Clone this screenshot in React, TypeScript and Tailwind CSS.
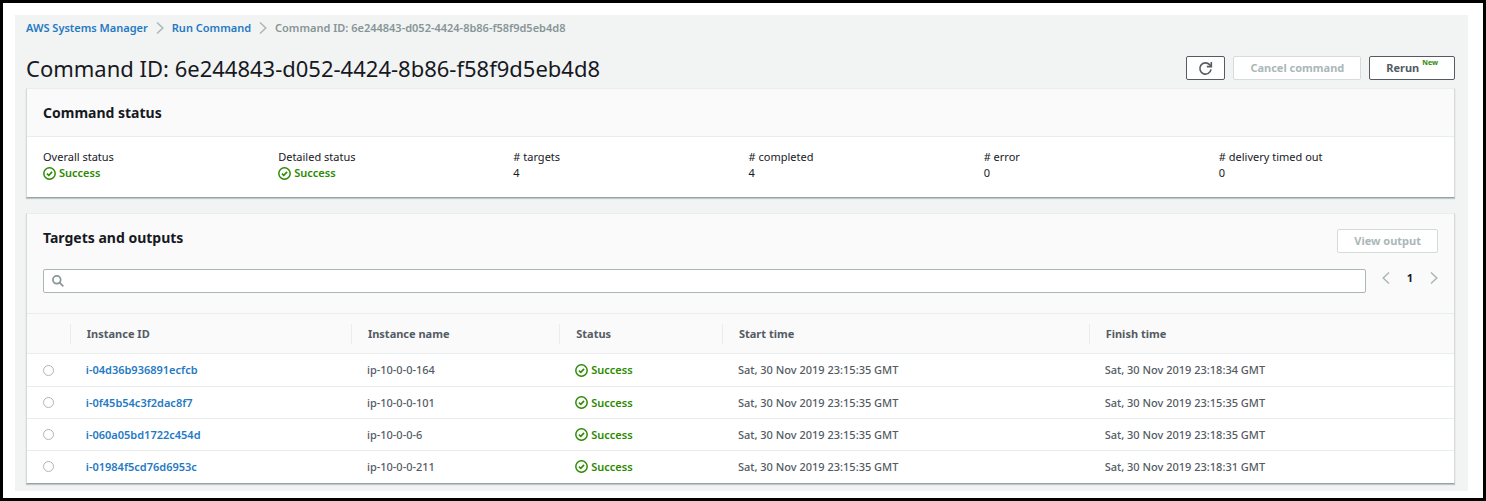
import React from "react";

const instances = [
  { id: "i-04d36b936891ecfcb", name: "ip-10-0-0-164", start: "Sat, 30 Nov 2019 23:15:35 GMT", finish: "Sat, 30 Nov 2019 23:18:34 GMT" },
  { id: "i-0f45b54c3f2dac8f7", name: "ip-10-0-0-101", start: "Sat, 30 Nov 2019 23:15:35 GMT", finish: "Sat, 30 Nov 2019 23:15:35 GMT" },
  { id: "i-060a05bd1722c454d", name: "ip-10-0-0-6", start: "Sat, 30 Nov 2019 23:15:35 GMT", finish: "Sat, 30 Nov 2019 23:18:35 GMT" },
  { id: "i-01984f5cd76d6953c", name: "ip-10-0-0-211", start: "Sat, 30 Nov 2019 23:15:35 GMT", finish: "Sat, 30 Nov 2019 23:18:31 GMT" },
];

const counts = [
  { label: "# targets", value: "4" },
  { label: "# completed", value: "4" },
  { label: "# error", value: "0" },
  { label: "# delivery timed out", value: "0" },
];

function Chevron({ left = false }: { left?: boolean }) {
  return (
    <svg viewBox="0 0 8 14" fill="none" stroke="#aab7b8" strokeWidth="1.5" className="h-[14px] w-2 shrink-0" aria-hidden="true">
      <path d={left ? "M7 1.5 L1.2 7 L7 12.5" : "M1 1.5 L6.8 7 L1 12.5"} />
    </svg>
  );
}

function Success() {
  return (
    <span className="flex items-center gap-[3px] font-semibold text-[#2b8a00]">
      <svg viewBox="0 0 16 16" fill="none" stroke="#2b8a00" strokeWidth="1.8" className="h-[13px] w-[13px] shrink-0" aria-hidden="true">
        <circle cx="8" cy="8" r="7" />
        <path d="M4.8 8.2 L7.1 10.3 L11.2 6" />
      </svg>
      Success
    </span>
  );
}

const card = "border border-t-[#eaeded] border-r-[#d5dbdb] border-b-[#95a5a6] border-l-[#d5dbdb] bg-white shadow-[0_1px_1px_0_rgba(0,28,36,0.2)]";
const button = "flex h-6 items-center rounded-xs border bg-white px-4 text-[11px] leading-4 font-bold";
const th = "p-0 text-left font-bold";
const divider = "flex h-5 items-center border-l border-[#eaeded] pl-4";

export default function App() {
  return (
    <div className="min-h-screen border-3 border-black bg-white px-3 pt-3 pb-[6px] font-['Noto_Sans','Open_Sans',sans-serif] text-[11px] leading-4 text-[#16191f]">
      <main className="mr-[3px] bg-[#f2f3f3] pt-[5px] pr-[13px] pb-[7px] pl-[11px]">
        <nav aria-label="Breadcrumb">
          <ol className="flex items-center font-semibold">
            <li><a href="#ssm" className="text-[#1f7ac4]">AWS Systems Manager</a></li>
            <li className="mx-2"><Chevron /></li>
            <li><a href="#run" className="text-[#1f7ac4]">Run Command</a></li>
            <li className="mx-2"><Chevron /></li>
            <li className="text-[#879596]">Command ID: 6e244843-d052-4424-8b86-f58f9d5eb4d8</li>
          </ol>
        </nav>

        <div className="mt-4 flex items-center justify-between pb-1">
          <h1 className="text-[22px] leading-8">Command ID: 6e244843-d052-4424-8b86-f58f9d5eb4d8</h1>
          <div className="flex gap-2">
            <button aria-label="Refresh" className="flex h-6 w-[39px] items-center justify-center rounded-xs border border-[#545b64] bg-white">
              <svg viewBox="0 0 16 16" fill="none" stroke="#545b64" strokeWidth="1.7" className="h-[15px] w-[15px]" aria-hidden="true">
                <path d="M13.9 9 A6 6 0 1 1 12.4 3.9 L14 5.6" />
                <path d="M14.2 1 V6 H9.4" />
              </svg>
            </button>
            <button disabled className={`${button} border-[#d5dbdb] text-[#aab7b8]`}>Cancel command</button>
            <button className={`${button} border-[#545b64] text-[#545b64]`}>
              Rerun
              <span className="ml-[3px] self-start text-[7px] leading-3 text-[#2b8a00]">New</span>
            </button>
          </div>
        </div>

        <section className={card}>
          <header className="border-b border-[#eaeded] bg-[#fafafa] px-4 py-3">
            <h2 className="text-sm leading-[23px] font-bold">Command status</h2>
          </header>
          <dl className="grid grid-cols-6 pt-3 pb-4 pl-4">
            <div><dt>Overall status</dt><dd><Success /></dd></div>
            <div><dt>Detailed status</dt><dd><Success /></dd></div>
            {counts.map((c) => (
              <div key={c.label}><dt>{c.label}</dt><dd>{c.value}</dd></div>
            ))}
          </dl>
        </section>

        <section className={`mt-[15px] ${card}`}>
          <header className="bg-[#fafafa] px-4 pt-[15px] pb-5">
            <div className="flex items-start justify-between">
              <h2 className="text-sm leading-[18px] font-bold">Targets and outputs</h2>
              <button disabled className={`${button} border-[#d5dbdb] text-[#aab7b8]`}>View output</button>
            </div>
            <div className="mt-4 flex items-start">
              <label className="flex h-6 grow items-center gap-2 rounded-xs border border-[#aab7b8] bg-white px-2">
                <svg viewBox="0 0 14 14" fill="none" stroke="#879596" strokeWidth="2" className="h-3 w-3 shrink-0" aria-hidden="true">
                  <circle cx="5.6" cy="5.6" r="4.5" />
                  <path d="M8.9 8.9 L13.2 13.2" />
                </svg>
                <input type="text" aria-label="Search targets" className="min-w-0 grow outline-none" />
              </label>
              <div className="ml-4 flex items-center pt-px">
                <button aria-label="Previous page"><Chevron left /></button>
                <span className="w-10 text-center font-bold">1</span>
                <button aria-label="Next page"><Chevron /></button>
              </div>
            </div>
          </header>
          <table className="w-full table-fixed border-collapse text-[#545b64]">
            <colgroup>
              <col className="w-[3%]" />
              <col className="w-[19.7%]" />
              <col className="w-[14.6%]" />
              <col className="w-[11.4%]" />
              <col className="w-[25.7%]" />
              <col />
            </colgroup>
            <thead className="border-y border-[#eaeded] bg-[#fafafa]">
              <tr className="h-10">
                <td />
                {["Instance ID", "Instance name", "Status", "Start time", "Finish time"].map((h) => (
                  <th key={h} scope="col" className={th}><div className={divider}>{h}</div></th>
                ))}
              </tr>
            </thead>
            <tbody className="font-medium">
              {instances.map((r) => (
                <tr key={r.id} className="h-8 border-b border-[#eaeded] first:h-[33px] last:border-b-0">
                  <td className="pl-4">
                    <input type="radio" name="instance" aria-label={r.id} className="block h-[11px] w-[11px] appearance-none rounded-full border border-[#aab7b8] bg-white" />
                  </td>
                  <td className="pl-4"><a href={`#${r.id}`} className="font-semibold text-[#1f7ac4]">{r.id}</a></td>
                  <td className="pl-4">{r.name}</td>
                  <td className="pl-4"><Success /></td>
                  <td className="pl-4">{r.start}</td>
                  <td className="pl-4">{r.finish}</td>
                </tr>
              ))}
            </tbody>
          </table>
        </section>
      </main>
    </div>
  );
}
